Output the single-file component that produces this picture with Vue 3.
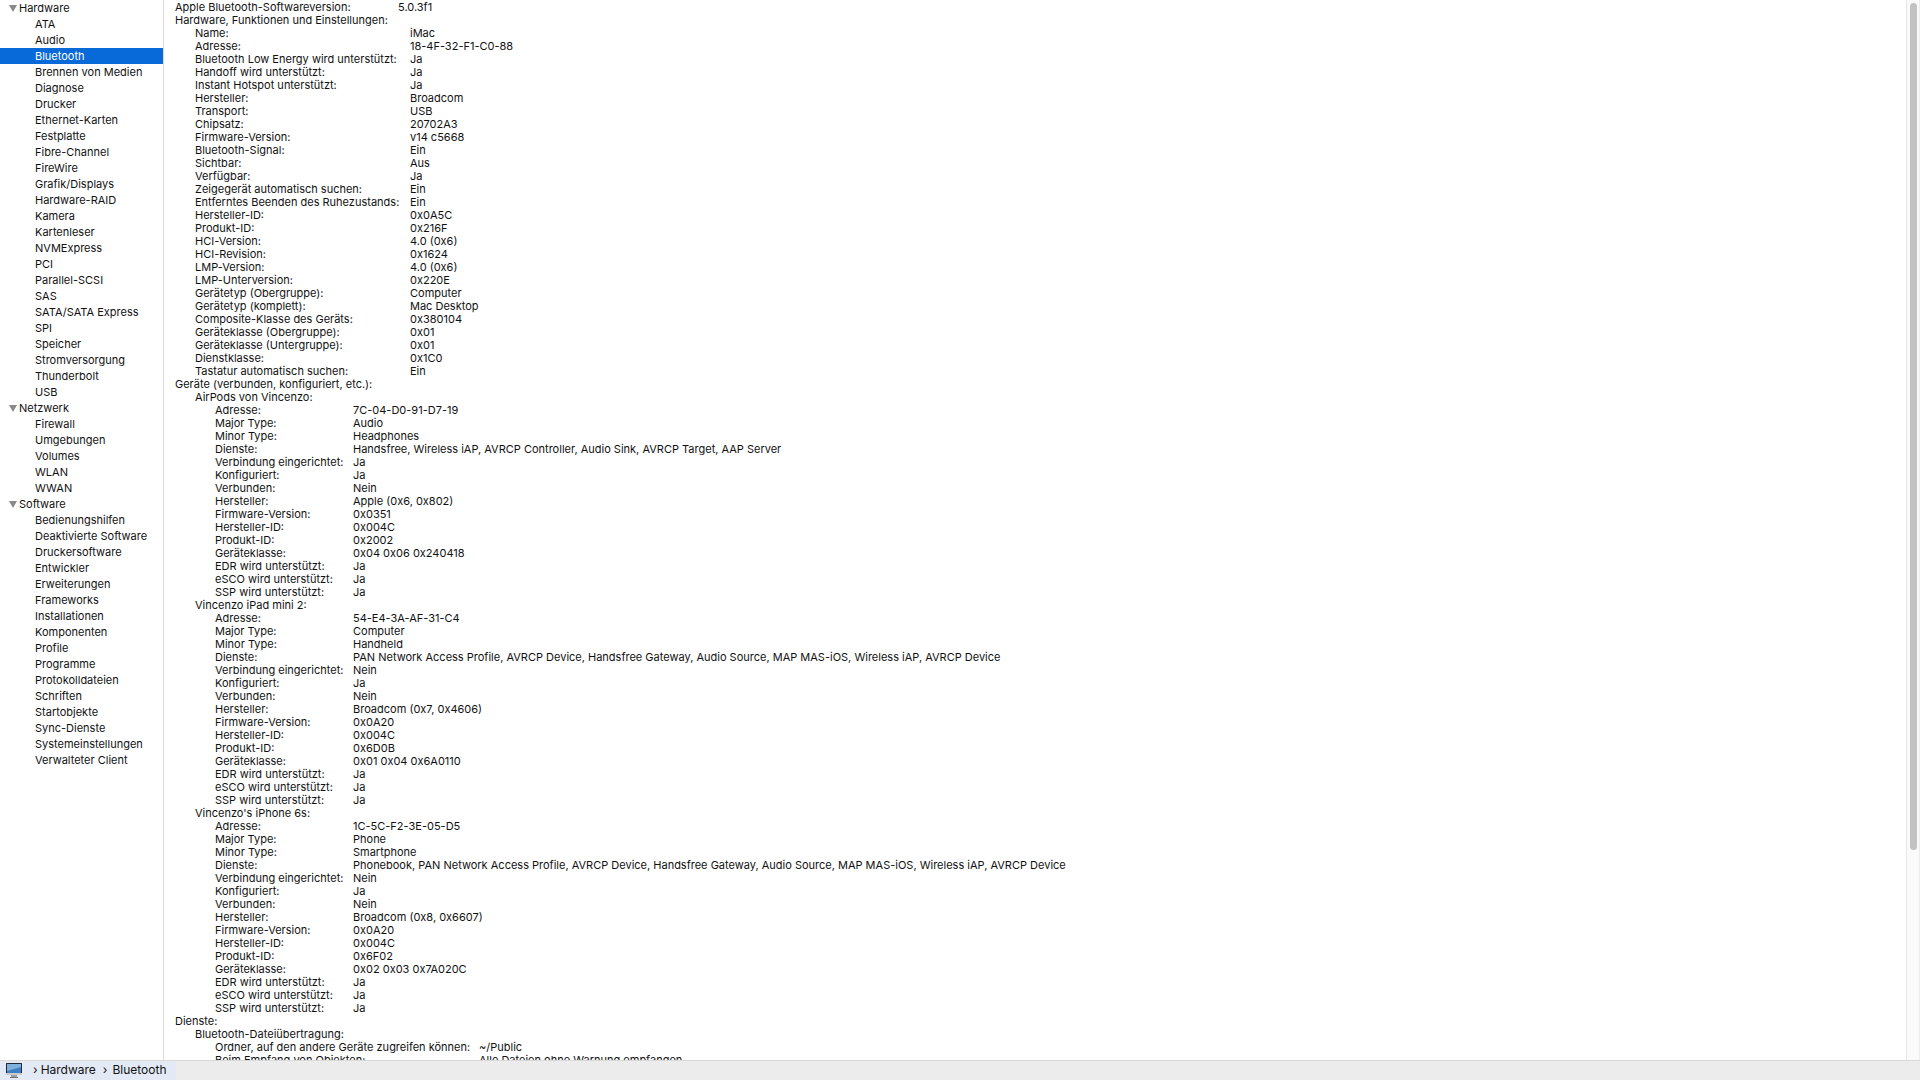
<template>
  <div class="window">
    <div class="main">
      <aside class="sidebar">
        <template v-for="group in tree" :key="group.name">
          <div class="node group">
            <span class="triangle"></span>{{ group.name }}
          </div>
          <div
            v-for="item in group.items"
            :key="item"
            class="node leaf"
            :class="{ selected: item === 'Bluetooth' }"
          >
            {{ item }}
          </div>
        </template>
      </aside>
      <section class="detail">
        <div v-for="(row, i) in rows" :key="i" class="row" :class="`level${row.level}`">
          <span class="label" :class="row.col">{{ row.label }}</span>
          <span class="value">{{ row.value }}</span>
        </div>
      </section>
      <div class="scrollbar">
        <div class="thumb"></div>
      </div>
    </div>
    <footer class="statusbar">
      <div class="crumbs">
        <svg class="imac" width="16" height="16" viewBox="0 0 16 16">
          <rect x="0" y="0" width="16" height="11" rx="0.5" fill="#23262b" />
          <rect x="1" y="1" width="14" height="9" fill="#3f7fc4" />
          <path d="M1 1h14v3L1 8z" fill="#7fb0de" />
          <rect x="0" y="10" width="16" height="2" fill="#c9cbce" />
          <rect x="5" y="12" width="6" height="2" fill="#9a9c9f" />
          <rect x="4" y="14" width="8" height="1" fill="#6f7174" />
        </svg>
        <span class="chevron">›</span>
        <span class="crumb">Hardware</span>
        <span class="chevron">›</span>
        <span class="crumb">Bluetooth</span>
      </div>
    </footer>
  </div>
</template>

<script setup>
const tree = [
  {
    name: 'Hardware',
    items: [
      'ATA', 'Audio', 'Bluetooth', 'Brennen von Medien', 'Diagnose', 'Drucker', 'Ethernet-Karten',
      'Festplatte', 'Fibre-Channel', 'FireWire', 'Grafik/Displays', 'Hardware-RAID', 'Kamera',
      'Kartenleser', 'NVMExpress', 'PCI', 'Parallel-SCSI', 'SAS', 'SATA/SATA Express', 'SPI',
      'Speicher', 'Stromversorgung', 'Thunderbolt', 'USB'
    ]
  },
  {
    name: 'Netzwerk',
    items: ['Firewall', 'Umgebungen', 'Volumes', 'WLAN', 'WWAN']
  },
  {
    name: 'Software',
    items: [
      'Bedienungshilfen', 'Deaktivierte Software', 'Druckersoftware', 'Entwickler', 'Erweiterungen',
      'Frameworks', 'Installationen', 'Komponenten', 'Profile', 'Programme', 'Protokolldateien',
      'Schriften', 'Startobjekte', 'Sync-Dienste', 'Systemeinstellungen', 'Verwalteter Client'
    ]
  }
]

const hardware = [
  ['Name:', 'iMac'],
  ['Adresse:', '18-4F-32-F1-C0-88'],
  ['Bluetooth Low Energy wird unterstützt:', 'Ja'],
  ['Handoff wird unterstützt:', 'Ja'],
  ['Instant Hotspot unterstützt:', 'Ja'],
  ['Hersteller:', 'Broadcom'],
  ['Transport:', 'USB'],
  ['Chipsatz:', '20702A3'],
  ['Firmware-Version:', 'v14 c5668'],
  ['Bluetooth-Signal:', 'Ein'],
  ['Sichtbar:', 'Aus'],
  ['Verfügbar:', 'Ja'],
  ['Zeigegerät automatisch suchen:', 'Ein'],
  ['Entferntes Beenden des Ruhezustands:', 'Ein'],
  ['Hersteller-ID:', '0x0A5C'],
  ['Produkt-ID:', '0x216F'],
  ['HCI-Version:', '4.0 (0x6)'],
  ['HCI-Revision:', '0x1624'],
  ['LMP-Version:', '4.0 (0x6)'],
  ['LMP-Unterversion:', '0x220E'],
  ['Gerätetyp (Obergruppe):', 'Computer'],
  ['Gerätetyp (komplett):', 'Mac Desktop'],
  ['Composite-Klasse des Geräts:', '0x380104'],
  ['Geräteklasse (Obergruppe):', '0x01'],
  ['Geräteklasse (Untergruppe):', '0x01'],
  ['Dienstklasse:', '0x1C0'],
  ['Tastatur automatisch suchen:', 'Ein']
]

const devices = [
  {
    name: 'AirPods von Vincenzo:',
    rows: [
      ['Adresse:', '7C-04-D0-91-D7-19'],
      ['Major Type:', 'Audio'],
      ['Minor Type:', 'Headphones'],
      ['Dienste:', 'Handsfree, Wireless iAP, AVRCP Controller, Audio Sink, AVRCP Target, AAP Server'],
      ['Verbindung eingerichtet:', 'Ja'],
      ['Konfiguriert:', 'Ja'],
      ['Verbunden:', 'Nein'],
      ['Hersteller:', 'Apple (0x6, 0x802)'],
      ['Firmware-Version:', '0x0351'],
      ['Hersteller-ID:', '0x004C'],
      ['Produkt-ID:', '0x2002'],
      ['Geräteklasse:', '0x04 0x06 0x240418'],
      ['EDR wird unterstützt:', 'Ja'],
      ['eSCO wird unterstützt:', 'Ja'],
      ['SSP wird unterstützt:', 'Ja']
    ]
  },
  {
    name: 'Vincenzo iPad mini 2:',
    rows: [
      ['Adresse:', '54-E4-3A-AF-31-C4'],
      ['Major Type:', 'Computer'],
      ['Minor Type:', 'Handheld'],
      ['Dienste:', 'PAN Network Access Profile, AVRCP Device, Handsfree Gateway, Audio Source, MAP MAS-iOS, Wireless iAP, AVRCP Device'],
      ['Verbindung eingerichtet:', 'Nein'],
      ['Konfiguriert:', 'Ja'],
      ['Verbunden:', 'Nein'],
      ['Hersteller:', 'Broadcom (0x7, 0x4606)'],
      ['Firmware-Version:', '0x0A20'],
      ['Hersteller-ID:', '0x004C'],
      ['Produkt-ID:', '0x6D0B'],
      ['Geräteklasse:', '0x01 0x04 0x6A0110'],
      ['EDR wird unterstützt:', 'Ja'],
      ['eSCO wird unterstützt:', 'Ja'],
      ['SSP wird unterstützt:', 'Ja']
    ]
  },
  {
    name: "Vincenzo's iPhone 6s:",
    rows: [
      ['Adresse:', '1C-5C-F2-3E-05-D5'],
      ['Major Type:', 'Phone'],
      ['Minor Type:', 'Smartphone'],
      ['Dienste:', 'Phonebook, PAN Network Access Profile, AVRCP Device, Handsfree Gateway, Audio Source, MAP MAS-iOS, Wireless iAP, AVRCP Device'],
      ['Verbindung eingerichtet:', 'Nein'],
      ['Konfiguriert:', 'Ja'],
      ['Verbunden:', 'Nein'],
      ['Hersteller:', 'Broadcom (0x8, 0x6607)'],
      ['Firmware-Version:', '0x0A20'],
      ['Hersteller-ID:', '0x004C'],
      ['Produkt-ID:', '0x6F02'],
      ['Geräteklasse:', '0x02 0x03 0x7A020C'],
      ['EDR wird unterstützt:', 'Ja'],
      ['eSCO wird unterstützt:', 'Ja'],
      ['SSP wird unterstützt:', 'Ja']
    ]
  }
]

const rows = [
  { level: 0, label: 'Apple Bluetooth-Softwareversion:', value: '5.0.3f1', col: 'col-top' },
  { level: 0, label: 'Hardware, Funktionen und Einstellungen:' },
  ...hardware.map(([label, value]) => ({ level: 1, label, value, col: 'col-hardware' })),
  { level: 0, label: 'Geräte (verbunden, konfiguriert, etc.):' },
  ...devices.flatMap((d) => [
    { level: 1, label: d.name },
    ...d.rows.map(([label, value]) => ({ level: 2, label, value, col: 'col-device' }))
  ]),
  { level: 0, label: 'Dienste:' },
  { level: 1, label: 'Bluetooth-Dateiübertragung:' },
  { level: 2, label: 'Ordner, auf den andere Geräte zugreifen können:', value: '~/Public', col: 'col-service' },
  { level: 2, label: 'Beim Empfang von Objekten:', value: 'Alle Dateien ohne Warnung empfangen', col: 'col-service' }
]
</script>

<style>
html,
body {
  margin: 0;
  background: #fff;
}
</style>

<style scoped>
.window {
  display: flex;
  flex-direction: column;
  width: 1920px;
  height: 1080px;
  overflow: hidden;
  font-family: Inter, 'Liberation Sans', Arial, sans-serif;
  color: #111;
  background: #fff;
}

.main {
  display: flex;
  flex: 1;
  min-height: 0;
}

.sidebar {
  width: 163px;
  flex: none;
  border-right: 1px solid #d9d9d9;
  font-size: 11px;
}

.node {
  height: 16px;
  line-height: 16px;
  white-space: nowrap;
}

.group {
  display: flex;
  align-items: center;
  padding-left: 9px;
}

.triangle {
  width: 0;
  height: 0;
  margin-right: 2px;
  border-left: 4px solid transparent;
  border-right: 4px solid transparent;
  border-top: 7px solid #8a8a8a;
}

.leaf {
  padding-left: 35px;
}

.selected {
  background: #0869d8;
  color: #fff;
}

.detail {
  flex: 1;
  min-width: 0;
  padding: 1px 0 0 11px;
  overflow: hidden;
  font-size: 11px;
}

.row {
  display: flex;
  height: 13px;
  line-height: 13px;
  white-space: nowrap;
}

.level1 {
  padding-left: 20px;
}

.level2 {
  padding-left: 40px;
}

.col-top {
  width: 223px;
}

.col-hardware {
  width: 215px;
}

.col-device {
  width: 138px;
}

.col-service {
  width: 264px;
}

.scrollbar {
  width: 14px;
  flex: none;
  padding: 3px 2px 0 3px;
  box-sizing: border-box;
  background: #fafafa;
  border-left: 1px solid #e6e6e6;
  border-right: 1px solid #ededed;
}

.thumb {
  height: 847px;
  border-radius: 4px;
  background: #c2c2c2;
}

.statusbar {
  display: flex;
  height: 20px;
  flex: none;
  box-sizing: border-box;
  background: #ececec;
  border-top: 1px solid #d9d9d9;
}

.crumbs {
  display: flex;
  align-items: center;
  width: 176px;
  padding-left: 6px;
  box-sizing: border-box;
  background: #e3eaf5;
  font-size: 12px;
}

.imac {
  flex: none;
}

.chevron {
  margin: 0 3px 0 11px;
  padding-bottom: 2px;
  font-size: 12px;
}

.crumb {
  padding-bottom: 2px;
}

.crumb + .chevron {
  margin: 0 5px 0 7px;
}
</style>
